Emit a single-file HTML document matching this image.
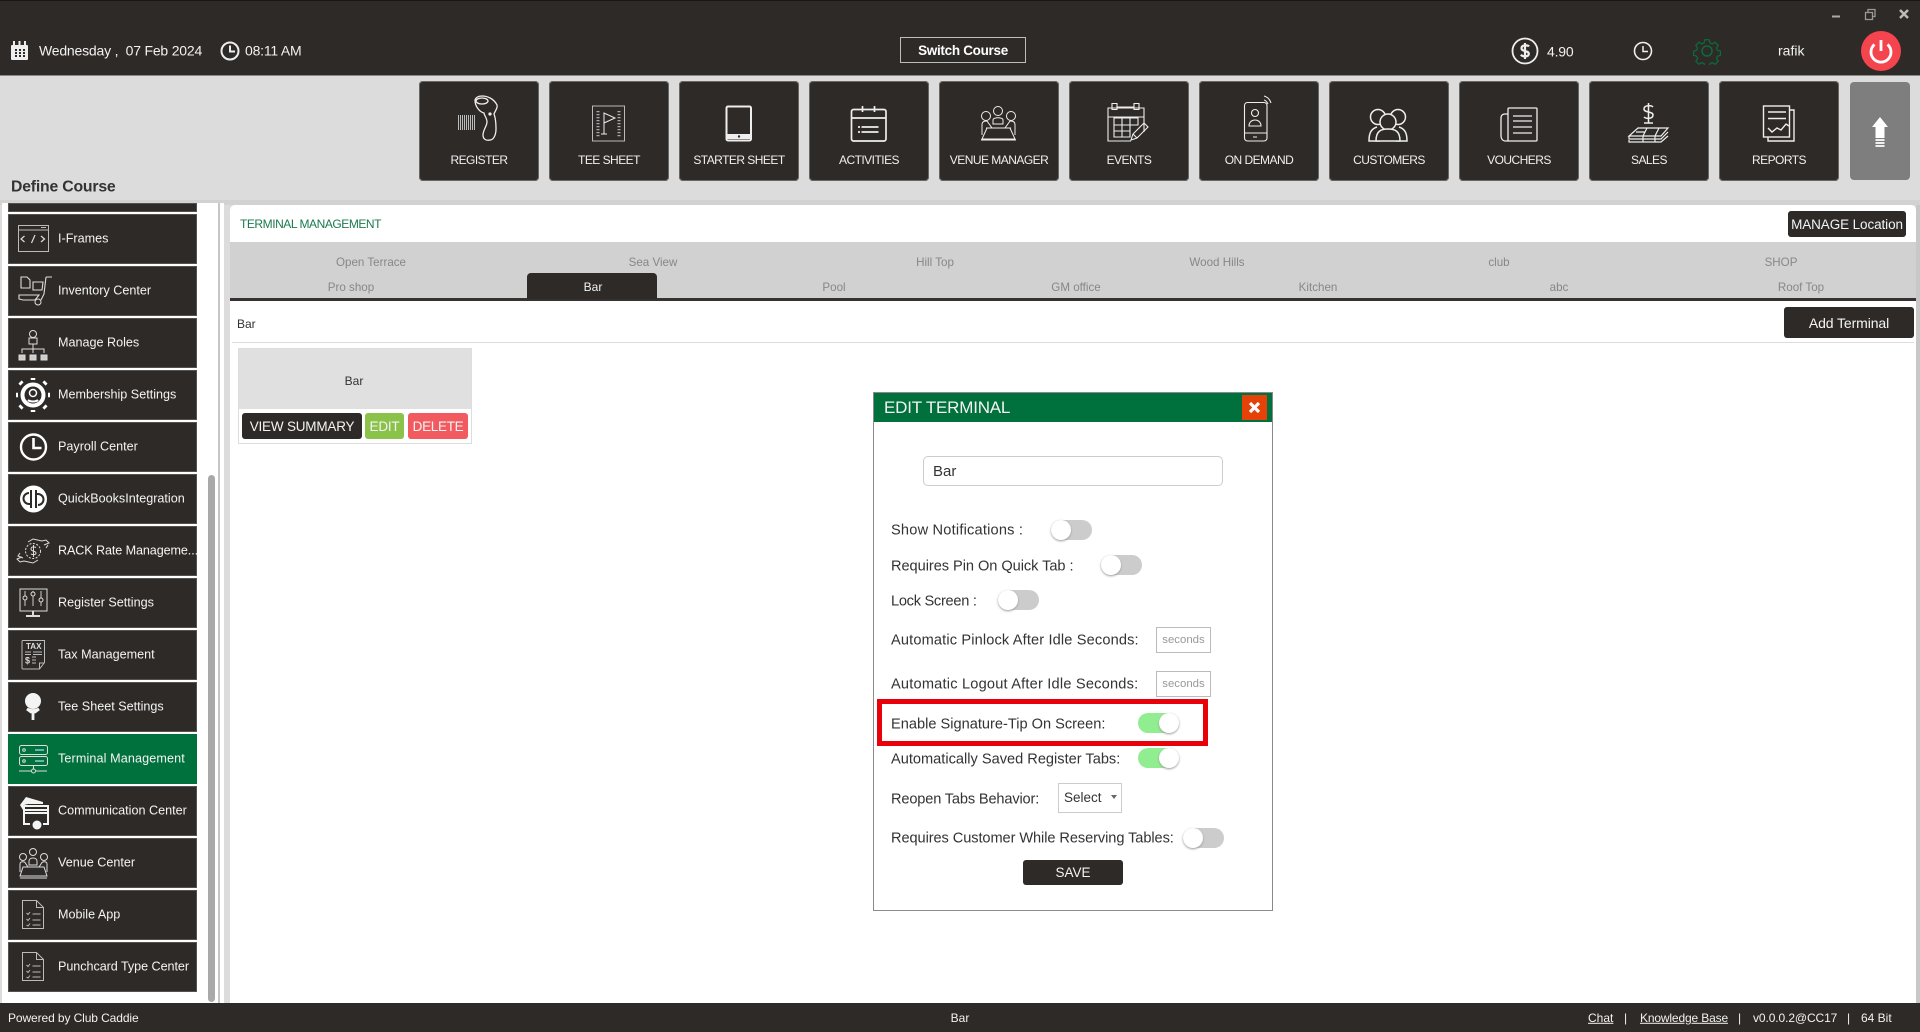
<!DOCTYPE html>
<html><head><meta charset="utf-8"><title>Terminal Management</title>
<style>
html,body{margin:0;padding:0;width:1920px;height:1032px;overflow:hidden;background:#dcdcdc;font-family:"Liberation Sans",sans-serif}
div,span,svg{position:absolute}
.t{white-space:nowrap;transform:translateY(-50%);line-height:1.2}
.c{white-space:nowrap;transform:translate(-50%,-50%);line-height:1.2}
.w{color:#f2f2f2}
.nav{top:81px;width:120px;height:100px;background:#2e2a27;border-radius:4px;box-shadow:0 0 0 1px #6a6663 inset}
.nav svg{left:0;top:0}
.nav span{left:0;width:120px;text-align:center;top:72px;color:#f0f0f0;font-size:12px;letter-spacing:-.53px;white-space:nowrap;line-height:14px}
svg{fill:none;stroke:#eee;stroke-width:1.3}
.s{left:8px;width:189px;height:50px;background:#2e2a27;box-shadow:0 0 0 1px #55514e inset}
.s svg{left:0;top:0;stroke:#ddd;stroke-width:1}
.s span{left:50px;top:25px;transform:translateY(-50%);color:#f4f4f4;font-size:12.6px;white-space:nowrap;line-height:1.2}
.tab{color:#878787;font-size:11.6px;margin-top:1px}
.lab{color:#333;font-size:14.6px;margin-top:1px}
.tg{width:41px;height:20px;border-radius:10px;background:#ccc}
.tg i{position:absolute;left:0;top:0;width:20px;height:20px;border-radius:50%;background:#fff;box-shadow:0 1px 2px #999;display:block}
.tg.on{background:#90ee90}.tg.on i{left:21px}
.btn{background:#2e2a27;color:#f4f4f4;border-radius:3px;text-align:center;white-space:nowrap}
.box{left:1156px;width:53px;height:24px;border:1px solid #bbb;color:#999;font-size:11.4px;text-align:center;line-height:24px;background:#fff}
</style></head><body>

<!-- header -->
<div style="left:0;top:0;width:1920px;height:75px;background:#2e2a27;border-top:1px solid #1a1816;box-sizing:border-box"></div>
<div style="left:0;top:75px;width:1920px;height:1px;background:#8a8a8a"></div>
<svg style="left:10px;top:41px" width="20" height="20" viewBox="0 0 20 20"><rect x="1" y="4" width="17" height="15" fill="#eee" stroke="none" rx="1"/><path d="M4 0v6M9.500 0v6M15 0v6" stroke-width="2"/><path d="M5 9h2M9 9h2M13 9h2M5 12h2M9 12h2M13 12h2M5 15h2M9 15h2M13 15h2" stroke="#2e2a27" stroke-width="2"/></svg>
<span class="t w" style="left:39px;top:51px;font-size:14px;letter-spacing:-.2px">Wednesday ,&nbsp; 07 Feb 2024</span>
<svg style="left:220px;top:41px" width="20" height="20" viewBox="0 0 20 20"><circle cx="10" cy="10" r="8.500" stroke-width="2"/><path d="M10 4.500v6h5" stroke-width="2"/></svg>
<span class="t w" style="left:245px;top:51px;font-size:14px;letter-spacing:-.2px">08:11 AM</span>
<div style="left:900px;top:37px;width:124px;height:24px;border:1px solid #bdbdbd;color:#fff;font-weight:bold;font-size:13.500px;text-align:center;line-height:26px;letter-spacing:-.3px;white-space:nowrap">Switch Course</div>

<svg style="left:1511px;top:37px" width="28" height="28" viewBox="0 0 28 28"><circle cx="14" cy="14" r="12.500" stroke-width="1.800"/><path d="M18 9.500c-1-1.500-7-2-7.500 1.500C10 15 18 13 17.800 17c-.3 3.200-6 3-8 .8M14 6v16" stroke-width="2.200"/></svg>
<span class="t w" style="left:1547px;top:52px;font-size:14px;letter-spacing:-.2px">4.90</span>
<svg style="left:1633px;top:41px" width="20" height="20" viewBox="0 0 20 20"><circle cx="10" cy="10" r="8.500" stroke-width="1.600"/><path d="M10 5v5.500h5" stroke-width="1.500"/></svg>
<svg style="left:1693px;top:37px" width="28" height="28" viewBox="0 0 28 28"><path stroke="#0b6b3a" stroke-width="1.400" d="M11.500 1.500h5l.8 3.500 2.600 1.100 3-1.900 3.500 3.500-1.900 3 1.100 2.600 3.300.8v4.800l-3.300.8-1.100 2.600 1.900 3-3.500 3.500-3-1.900-2.600 1.100-.8 3.300h-5l-.8-3.300-2.600-1.100-3 1.900-3.500-3.500 1.900-3-1.100-2.600-3.300-.8v-4.800l3.300-.8 1.100-2.600-1.900-3 3.500-3.500 3 1.900 2.600-1.100z" transform="translate(1.400 1.400) scale(.9)"/><circle cx="14" cy="14" r="5" stroke="#0b6b3a" stroke-width="1.500"/></svg>
<span class="t w" style="left:1778px;top:51px;font-size:14px">rafik</span>
<div style="left:1861px;top:31px;width:40px;height:40px;border-radius:50%;background:#f4444e"></div>
<svg style="left:1861px;top:31px" width="40" height="40" viewBox="0 0 40 40"><path d="M13.500 13.500a10 10 0 1 0 13 0M20 9v11" stroke="#fff" stroke-width="2.800"/></svg>
<svg style="left:1825px;top:4px" width="95" height="20" viewBox="0 0 95 20"><path d="M7 12.500h8" stroke="#aaa" stroke-width="2"/><path d="M40.500 8.500h7v7h-7zM43 8.500V5.500h7v7h-2.500" stroke="#999" stroke-width="1.300"/><path d="M75 6l8 8M83 6l-8 8" stroke="#bbb" stroke-width="2.500"/></svg>

<span class="t" style="left:11px;top:188px;font-size:15.8px;font-weight:bold;color:#333;letter-spacing:-.2px">Define Course</span>

<!-- top nav -->
<div class="nav" style="left:419px"><svg width="120" height="100"><path d="M39.500 34v15M41.500 34v15M43.500 34v15M45.500 34v15M47.500 34v15M49.500 34v15M51.500 34v15M53.500 34v15M55.500 34v15" stroke-width="1" stroke="#bbb"/><path d="M56 19c1-3 4-4 7-4 6 0 12 3 15 9 1 3-2 6-3 9 2 5 2 11 2 15 0 5-2 11-6 11-4 1-7-1-7-5 0-5 4-9 4-13 0-4-3-7-3-9-4-1-9-6-9-13z" stroke-width="1.300"/><ellipse cx="63" cy="20" rx="6" ry="3"/><circle cx="71" cy="33" r="1" fill="#eee"/></svg><span>REGISTER</span></div>
<div class="nav" style="left:549px"><svg width="120" height="100"><rect x="43.500" y="25" width="32" height="35" stroke="#bbb" stroke-width="1"/><path d="M49 30v26M70 30v26" stroke-width="3" stroke="#aaa" stroke-dasharray="1.200 1.800"/><path d="M55 53V32l11 5-11 5M52 53h6" stroke-width="1"/></svg><span>TEE SHEET</span></div>
<div class="nav" style="left:679px"><svg width="120" height="100"><rect x="47.500" y="25.500" width="24.500" height="34" rx="1.500" stroke-width="2"/><path d="M47 53h25v5H47z" fill="#eee" stroke="none"/><circle cx="60" cy="55.500" r="1.200" fill="#2e2a27" stroke="none"/></svg><span>STARTER SHEET</span></div>
<div class="nav" style="left:809px"><svg width="120" height="100"><rect x="42.500" y="28.500" width="34.500" height="31.500" rx="2" stroke-width="1.700"/><path d="M42 37h35M53.500 25v6M65.500 25v6M52.500 46h17M52.500 51h17M49 46h2M49 51h2" stroke-width="1.700"/></svg><span>ACTIVITIES</span></div>
<div class="nav" style="left:939px"><svg width="120" height="100"><g stroke-width="1"><circle cx="59" cy="30" r="4.500"/><circle cx="47" cy="35" r="4.500"/><circle cx="72" cy="35" r="4.500"/><path d="M54 43v-4c0-3 10-3 10 0v4zM43 54V44c0-4 3-4 5-4l5 7h-6M76 54V44c0-4-3-4-5-4l-5 7h6M48 47h23l5 11H43zM42 59h35"/></g></svg><span>VENUE MANAGER</span></div>
<div class="nav" style="left:1069px"><svg width="120" height="100"><g stroke-width="1.100"><path d="M62 60H39V27h36v24M39 36h36M43 22.500h5v6h-5zM65 22.500h5v6h-5zM48 26h17"/><path d="M45 37h24v7H45zM45 44h16v12H45zM53 37v19M61 37v7M45 50h16"/><path d="M62 59l2-6 11-11 4 4-11 11zM64 53l4 4"/></g></svg><span>EVENTS</span></div>
<div class="nav" style="left:1199px"><svg width="120" height="100"><g stroke-width="1.100"><rect x="45.500" y="21.500" width="22.500" height="38.500" rx="3"/><path d="M46 52h22M54 56h4" /><circle cx="56" cy="32" r="3.500"/><path d="M50 45c0-8 12-8 12 0zM65 15c4 1 6 4 7 7M65 19c2 .5 3 2 4 4"/></g></svg><span>ON DEMAND</span></div>
<div class="nav" style="left:1329px"><svg width="120" height="100"><g stroke-width="1.500"><circle cx="49" cy="36" r="7.500"/><circle cx="69" cy="36" r="7.500"/><path d="M51 60H40c0-8 2-12 8-14M67 60h11c0-8-2-12-8-14"/><circle cx="59" cy="41" r="8" fill="#2e2a27"/><path d="M47 60c0-10 5-12 12-12s12 2 12 12z" fill="#2e2a27"/></g></svg><span>CUSTOMERS</span></div>
<div class="nav" style="left:1459px"><svg width="120" height="100"><g stroke-width="1.300"><path d="M49 60V28q0-1 1-1h27q1 0 1 1v31q0 1-1 1zM49 33h-3c-3 0-4 2-4 4v18c0 3 2 5 4 5h3"/><path d="M54 35h19M54 40h19M54 46h19M54 52h19"/></g></svg><span>VOUCHERS</span></div>
<div class="nav" style="left:1589px"><svg width="120" height="100"><g stroke-width="1.500"><path d="M64 26c-2-2-9-2-9 2 0 4 9 2 9 6 0 4-7 4-9 2M59.500 22v20M55 42h9l-4.500 0"/><path d="M49 47h30l-7 8H40zM47 51h9M58 47l-4 8M70 47l-4 8M40 55v3h32l7-7M40 59v2h32l7-6M54 55v6M66 55v6" stroke-width="1.200"/></g></svg><span>SALES</span></div>
<div class="nav" style="left:1719px"><svg width="120" height="100"><g stroke-width="1.400"><rect x="44.500" y="25" width="26" height="31"/><path d="M71 29h4v31H49v-4M49 31h18M49 37.500h18M49 47l4 4 5-4 4 2 5-6 3 2"/></g></svg><span>REPORTS</span></div>
<div style="left:1850px;top:82px;width:60px;height:98px;background:#7e7e7e;border-radius:4px"></div>
<svg style="left:1850px;top:82px" width="60" height="98" viewBox="0 0 60 98"><path d="M30 35l8 10h-3.500v11h-9V45H22z" fill="#fff" stroke="none"/><path d="M25.500 58h9M25.500 61h9M25.500 64h9" stroke="#fff" stroke-width="1.700"/></svg>

<!-- sidebar -->
<div style="left:0;top:200px;width:1920px;height:5px;background:#d2d2d2"></div>
<div style="left:2px;top:203px;width:216px;height:800px;background:#fff"></div>
<div style="left:218px;top:203px;width:2px;height:800px;background:#c6c6c6"></div>
<div style="left:220px;top:203px;width:4px;height:800px;background:#fff"></div>
<div style="left:208px;top:475px;width:7px;height:527px;background:#a9a9a9;border-radius:4px"></div>

<div class="s" style="top:203px;height:9px"></div>
<div class="s" style="top:214px"><svg width="50" height="50"><rect x="10.500" y="11.500" width="30" height="26" stroke="#bbb"/><path d="M11 16h29M33 13.500h5" stroke="#bbb"/><path d="M16.500 22l-3.500 3 3.500 3M33 22l3.500 3-3.500 3M27 21l-3.500 8" stroke-width="1.200"/></svg><span>I-Frames</span></div>
<div class="s" style="top:266px"><svg width="50" height="50"><path d="M13 11h6l3 3v8h-9zM25 16h10l-1 8h-9zM38 11l-2 17-3 6M11 29h20l-4 5H15l-4-1zM38 11h6" stroke-width="1.100"/><circle cx="30" cy="36" r="3"/></svg><span>Inventory Center</span></div>
<div class="s" style="top:318px"><svg width="50" height="50"><circle cx="25" cy="16" r="3.500"/><path d="M21 20h8v6h-8zM25 26v4M14 35v-4h22v4M25 30v5" stroke-width="1"/><path d="M11 37h6v5h-6zM22 37h6v5h-6zM33 37h6v5h-6z" fill="#ccc"/></svg><span>Manage Roles</span></div>
<div class="s" style="top:370px"><svg width="50" height="50"><circle cx="25" cy="25" r="10.500" stroke="#fff" stroke-width="4"/><path d="M25 10v-2M25 40v2M10 25h-2M40 25h2M14 14l-2-2M36 14l2-2M14 36l-2 2M36 36l2 2" stroke="#fff" stroke-width="4.500"/><circle cx="25" cy="23" r="3.500" stroke="#fff" stroke-width="1.500"/><path d="M20 30c2 2 8 2 10 0" stroke="#fff" stroke-width="2"/></svg><span>Membership Settings</span></div>
<div class="s" style="top:422px"><svg width="50" height="50"><circle cx="25.500" cy="25" r="12.500" stroke="#fff" stroke-width="2.400"/><path d="M25.500 16v10h8" stroke="#fff" stroke-width="2.600"/></svg><span>Payroll Center</span></div>
<div class="s" style="top:474px"><svg width="50" height="50"><circle cx="25.500" cy="25" r="13.500" fill="#fff" stroke="none"/><path d="M21 19a5.500 5.500 0 0 0 0 11h2V34M23 16v14M30 31a5.500 5.500 0 0 0 0-11h-2V16M28 20v14" stroke="#2e2a27" stroke-width="2"/></svg><span>QuickBooksIntegration</span></div>
<div class="s" style="top:526px"><svg width="50" height="50"><circle cx="25" cy="25" r="7.500" stroke-dasharray="2 1.500"/><path d="M28 21.500c-2-1-5-1-5 1.500 0 3 5 1.500 5 4 0 2-3 2-5 1M25.500 19v12"/><path d="M20 16l5-3 9 2 4-1 3 3-5 2M30 34l-5 3-9-2-4 1-3-3 5-2M12 27l-2 3 5 2M38 22l2-3"/></svg><span style="letter-spacing:-.1px">RACK Rate Manageme...</span></div>
<div class="s" style="top:578px"><svg width="50" height="50"><rect x="12" y="11" width="27" height="22"/><path d="M17 13v15M25 13v15M33 13v15" stroke="#ccc"/><circle cx="17" cy="20" r="2" fill="#2e2a27"/><circle cx="25" cy="16" r="2" fill="#2e2a27"/><circle cx="33" cy="22" r="2" fill="#2e2a27"/><path d="M25 33v4M18 38h14" stroke-width="2"/></svg><span>Register Settings</span></div>
<div class="s" style="top:630px"><svg width="50" height="50"><path d="M15 10.500h21.500v22l-5 6.500h-16.500q-1 0-1-1v-26.500q0-1 1-1z" stroke="#bbb"/><path d="M24 27h4M24 30h4M24 33h4M17 22h6M17 24.500h6M25 22h9M25 24.500h9" stroke="#bbb"/><path d="M31.500 39v-6h5" stroke="#bbb"/></svg><span>Tax Management</span><span style="left:18px;top:17px;font-size:8px;font-weight:bold;color:#ddd">TAX</span><span style="left:17px;top:31px;font-size:9px;font-weight:bold;color:#ddd">$</span></div>
<div class="s" style="top:682px"><svg width="50" height="50"><circle cx="25" cy="19" r="8" fill="#f4f4f4" stroke="none"/><path d="M19 27q6 3 12 0l-4 3H23zM25 30v8" stroke="#f4f4f4" stroke-width="2.800"/></svg><span>Tee Sheet Settings</span></div>
<div class="s" style="top:734px;background:#00703c;box-shadow:none"><svg width="50" height="50"><rect x="11.500" y="11.500" width="28" height="9" rx="2"/><rect x="11.500" y="22.500" width="28" height="9" rx="2"/><circle cx="16" cy="16" r="1.300"/><circle cx="16" cy="27" r="1.300"/><path d="M27 16h9M27 27h9" stroke="#8cc" stroke-width="1.500"/><path d="M25.500 32v3M11 37h12M28 37h11"/><circle cx="25.500" cy="37" r="2"/></svg><span style="letter-spacing:.12px">Terminal Management</span></div>
<div class="s" style="top:786px"><svg width="50" height="50"><path d="M12 19l6-8 17 5v2H20l-4 1-1 5z" fill="#f4f4f4" stroke="none"/><path d="M16 20h24v18h-5M16 20v18h6M16 24h24M16 27h24" stroke="#f4f4f4" stroke-width="2"/><circle cx="29" cy="39" r="4.500" fill="#f4f4f4" stroke="none"/></svg><span>Communication Center</span></div>
<div class="s" style="top:838px"><svg width="50" height="50"><circle cx="25" cy="14" r="3.500"/><circle cx="15" cy="19" r="3.500"/><circle cx="36" cy="19" r="3.500"/><path d="M21 27v-4c0-4 8-4 8 0v4zM12 34v-8c0-3 5-3 6 0l2 3M39 34v-8c0-3-5-3-6 0l-2 3M15 29h21l3 9H12zM12 40h27"/></svg><span>Venue Center</span></div>
<div class="s" style="top:890px"><svg width="50" height="50"><path d="M14.500 10.500h14l7 7v21h-21zM28.500 10.500v7h7M18.500 23l1.500 1.500 2-2.500M24.500 24h8M18.500 29l1.500 1.500 2-2.500M24.500 30h8M18.500 35l1.500 1 2-2.500M24.500 35h8" stroke="#bbb"/></svg><span>Mobile App</span></div>
<div class="s" style="top:942px"><svg width="50" height="50"><path d="M14.500 10.500h14l7 7v21h-21zM28.500 10.500v7h7M18.500 23l1.500 1.500 2-2.500M24.500 24h8M18.500 29l1.500 1.500 2-2.500M24.500 30h8M18.500 35l1.500 1 2-2.500M24.500 35h8" stroke="#bbb"/></svg><span style="letter-spacing:-.05px">Punchcard Type Center</span></div>

<!-- main panel -->
<div style="left:230px;top:205px;width:1686px;height:798px;background:#fff;border-radius:5px 5px 0 0"></div>
<div style="left:230px;top:242px;width:1686px;height:56px;background:#d1d1d1"></div>
<div style="left:230px;top:298px;width:1686px;height:3px;background:#37322f"></div>
<span class="t" style="left:240px;top:224px;font-size:12px;color:#1b7a4f;letter-spacing:-.45px">TERMINAL MANAGEMENT</span>
<div class="btn" style="left:1788px;top:211px;width:118px;height:26px;font-size:13.500px;line-height:28px;letter-spacing:-.1px">MANAGE Location</div>
<span class="c tab" style="left:371px;top:262px">Open Terrace</span>
<span class="c tab" style="left:653px;top:262px">Sea View</span>
<span class="c tab" style="left:935px;top:262px">Hill Top</span>
<span class="c tab" style="left:1217px;top:262px">Wood Hills</span>
<span class="c tab" style="left:1499px;top:262px">club</span>
<span class="c tab" style="left:1781px;top:262px">SHOP</span>
<span class="c tab" style="left:351px;top:287px">Pro shop</span>
<div style="left:527px;top:273px;width:130px;height:26px;background:#2e2a27;border-radius:4px 4px 0 0"></div>
<span class="c" style="left:593px;top:287px;font-size:12px;color:#f2f2f2">Bar</span>
<span class="c tab" style="left:834px;top:287px">Pool</span>
<span class="c tab" style="left:1076px;top:287px">GM office</span>
<span class="c tab" style="left:1318px;top:287px">Kitchen</span>
<span class="c tab" style="left:1559px;top:287px">abc</span>
<span class="c tab" style="left:1801px;top:287px">Roof Top</span>
<span class="t" style="left:237px;top:324px;font-size:12px;color:#333">Bar</span>
<div class="btn" style="left:1784px;top:307px;width:130px;height:31px;font-size:14px;line-height:32px;letter-spacing:-.1px">Add Terminal</div>
<div style="left:232px;top:342px;width:1682px;height:1px;background:#ddd"></div>

<div style="left:238px;top:348px;width:232px;height:94px;border:1px solid #ddd;background:#fff"></div>
<div style="left:239px;top:349px;width:232px;height:60px;background:#e0e0e0"></div>
<span class="c" style="left:354px;top:381px;font-size:12px;color:#333">Bar</span>
<div class="btn" style="left:242px;top:413px;width:120px;height:26px;font-size:13.500px;line-height:28px;letter-spacing:-.2px">VIEW SUMMARY</div>
<div class="btn" style="left:365px;top:413px;width:39px;height:26px;font-size:13.500px;line-height:28px;background:#8bc34a;letter-spacing:-.2px">EDIT</div>
<div class="btn" style="left:408px;top:413px;width:60px;height:26px;font-size:13.500px;line-height:28px;background:#f15b60;letter-spacing:-.3px">DELETE</div>

<!-- dialog -->
<div style="left:873px;top:392px;width:398px;height:517px;background:#fff;border:1px solid #8a8a8a"></div>
<div style="left:874px;top:393px;width:398px;height:29px;background:#00703c"></div>
<span class="t" style="left:884px;top:408px;font-size:17px;color:#f4f4f4;letter-spacing:-.2px">EDIT TERMINAL</span>
<div style="left:1242px;top:395px;width:25px;height:25px;background:#e5420a"></div>
<svg style="left:1242px;top:395px" width="25" height="25" viewBox="0 0 25 25"><path d="M8 8l9 9M17 8l-9 9" stroke="#fff" stroke-width="3.200"/></svg>
<div style="left:923px;top:456px;width:298px;height:28px;border:1px solid #ccc;border-radius:5px;background:#fff;color:#333;font-size:15px;line-height:30px;text-indent:9px">Bar</div>

<span class="t lab" style="left:891px;top:530px;letter-spacing:.2px">Show Notifications :</span>
<div class="tg" style="left:1051px;top:520px"><i></i></div>
<span class="t lab" style="left:891px;top:566px;letter-spacing:-.05px">Requires Pin On Quick Tab :</span>
<div class="tg" style="left:1101px;top:555px"><i></i></div>
<span class="t lab" style="left:891px;top:601px;letter-spacing:-.28px">Lock Screen :</span>
<div class="tg" style="left:998px;top:590px"><i></i></div>
<span class="t lab" style="left:891px;top:640px;letter-spacing:.14px">Automatic Pinlock After Idle Seconds:</span>
<div class="box" style="top:627px">seconds</div>
<span class="t lab" style="left:891px;top:684px;letter-spacing:.2px">Automatic Logout After Idle Seconds:</span>
<div class="box" style="top:671px">seconds</div>
<span class="t lab" style="left:891px;top:724px">Enable Signature-Tip On Screen:</span>
<div class="tg on" style="left:1138px;top:713px"><i></i></div>
<div style="left:877px;top:699px;width:321px;height:37px;border:5px solid #e8000b"></div>
<span class="t lab" style="left:891px;top:759px">Automatically Saved Register Tabs:</span>
<div class="tg on" style="left:1138px;top:748px"><i></i></div>
<span class="t lab" style="left:891px;top:799px;letter-spacing:-.16px">Reopen Tabs Behavior:</span>
<div style="left:1058px;top:783px;width:62px;height:28px;border:1px solid #ccc;color:#333;font-size:13.500px;line-height:28px;text-indent:5px;background:#fff">Select</div>
<svg style="left:1111px;top:795px" width="6" height="5" viewBox="0 0 6 5"><path d="M0 0h6L3 4z" fill="#666" stroke="none"/></svg>
<span class="t lab" style="left:891px;top:838px;letter-spacing:-.08px">Requires Customer While Reserving Tables:</span>
<div class="tg" style="left:1183px;top:828px"><i></i></div>
<div class="btn" style="left:1023px;top:860px;width:100px;height:25px;font-size:13.500px;line-height:25px">SAVE</div>

<!-- footer -->
<div style="left:0;top:1003px;width:1920px;height:29px;background:#2e2a27"></div>
<div style="left:1916px;top:205px;width:4px;height:798px;background:#c8c8c8"></div>
<span class="t w" style="left:8px;top:1018px;font-size:12px;letter-spacing:-.1px">Powered by Club Caddie</span>
<span class="c w" style="left:960px;top:1018px;font-size:12px">Bar</span>
<span class="t w" style="left:1588px;top:1018px;font-size:12px;text-decoration:underline">Chat</span>
<span class="t w" style="left:1624px;top:1018px;font-size:12px">|</span>
<span class="t w" style="left:1640px;top:1018px;font-size:12px;text-decoration:underline;letter-spacing:-.15px">Knowledge Base</span>
<span class="t w" style="left:1738px;top:1018px;font-size:12px">|</span>
<span class="t w" style="left:1753px;top:1018px;font-size:12px;letter-spacing:-.1px">v0.0.0.2@CC17</span>
<span class="t w" style="left:1847px;top:1018px;font-size:12px">|</span>
<span class="t w" style="left:1861px;top:1018px;font-size:12px">64 Bit</span>
</body></html>
